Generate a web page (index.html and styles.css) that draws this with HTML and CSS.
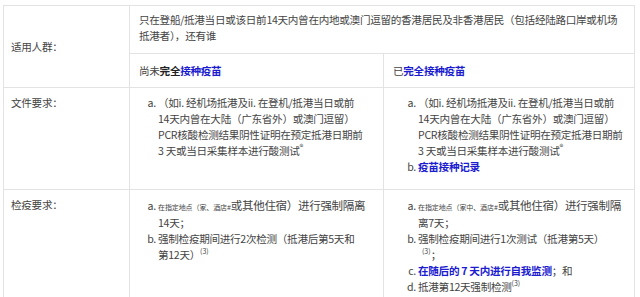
FILE: index.html
```html
<!DOCTYPE html>
<html lang="zh-CN">
<head>
<meta charset="utf-8">
<link rel="stylesheet" href="styles.css">
</head>
<body>
<table class="req">
  <colgroup>
    <col class="c1"><col class="c2"><col class="c3">
  </colgroup>
  <tr class="r1a">
    <td class="label" rowspan="2">适用人群：</td>
    <td colspan="2" class="who">只在登船/抵港当日或该日前14天内曾在内地或澳门逗留的香港居民及非香港居民（包括经陆路口岸或机场<br>抵港者），还有谁</td>
  </tr>
  <tr class="r1b">
    <td class="head">尚未<b class="dark">完全</b><b class="link">接种疫苗</b></td>
    <td class="head">已<b class="link">完全接种疫苗</b></td>
  </tr>
  <tr class="r2">
    <td class="label top">文件要求：</td>
    <td class="top">
      <ol class="list l2">
        <li>（如i. 经机场抵港及ii. 在登机/抵港当日或前<br>14天内曾在大陆（广东省外）或澳门逗留）<br>PCR核酸检测结果阴性证明在预定抵港日期前<br>3 天或当日采集样本进行酸测试<sup class="circ">®</sup></li>
      </ol>
    </td>
    <td class="top">
      <ol class="list l3">
        <li>（如i. 经机场抵港及ii. 在登机/抵港当日或前<br>14天内曾在大陆（广东省外）或澳门逗留）<br>PCR核酸检测结果阴性证明在预定抵港日期前<br>3 天或当日采集样本进行酸测试<sup class="circ">®</sup></li>
        <li><b class="link">疫苗接种记录</b></li>
      </ol>
    </td>
  </tr>
  <tr class="r3">
    <td class="label top">检疫要求：</td>
    <td class="top">
      <ol class="list l2">
        <li><span class="tiny">在指定地点（家、酒店#</span><span class="big">或其他住宿）进行强制隔离</span><br>14天；</li>
        <li>强制检疫期间进行2次检测（抵港后第5天和<br>第12天）<sup>(3)</sup></li>
      </ol>
    </td>
    <td class="top">
      <ol class="list l3">
        <li><span class="tiny">在指定地点（家中、酒店#</span><span class="big">或其他住宿）进行强制隔</span><br>离7天；</li>
        <li>强制检疫期间进行1次测试（抵港第5天）<br><sup class="lone">(3)</sup>；</li>
        <li><b class="link">在随后的 7 天内进行自我监测</b>；和</li>
        <li>抵港第12天强制检测<sup>(3)</sup></li>
      </ol>
    </td>
  </tr>
</table>
</body>
</html>
```
FILE: styles.css
```css
html, body {
  margin: 0;
  padding: 0;
  background: #fff;
}
body {
  padding: 5px 0 0 3px;
  font-family: "Noto Sans CJK SC", "Noto Sans", sans-serif;
  font-size: 10.6px;
  line-height: 16px;
  letter-spacing: -0.3px;
  color: #444;
}
.req {
  border-collapse: collapse;
  table-layout: fixed;
  width: 631px;
}
.c1 { width: 126px; }
.c2 { width: 254px; }
.c3 { width: 251px; }
.req td {
  border: 1px solid #e3e3e3;
  padding: 6px 6px 6px 9px;
  vertical-align: middle;
}
.req td.label {
  padding-left: 7px;
}
.req td.top {
  vertical-align: top;
  padding-top: 7px;
}
.r1a td.who {
  padding-top: 6px;
  padding-bottom: 9px;
  height: 32px;
}
.r1b td { height: 21px; }
.r2 td { height: 88px; }
.r3 td { height: 110px; }
b { font-weight: 700; }
.dark { color: #222; }
.link { color: #1b1bd0; }
.list {
  margin: 0;
  list-style: lower-alpha;
}
.l2 { padding-left: 19px; }
.l3 { padding-left: 25px; }
sup {
  font-size: 7px;
  line-height: 0;
  vertical-align: 5px;
  letter-spacing: 0;
}
sup.circ { font-size: 8px; }
sup.lone { margin-left: 4px; }
.tiny {
  font-size: 7px;
  letter-spacing: -0.1px;
}
.big {
  font-size: 11.5px;
}
```
